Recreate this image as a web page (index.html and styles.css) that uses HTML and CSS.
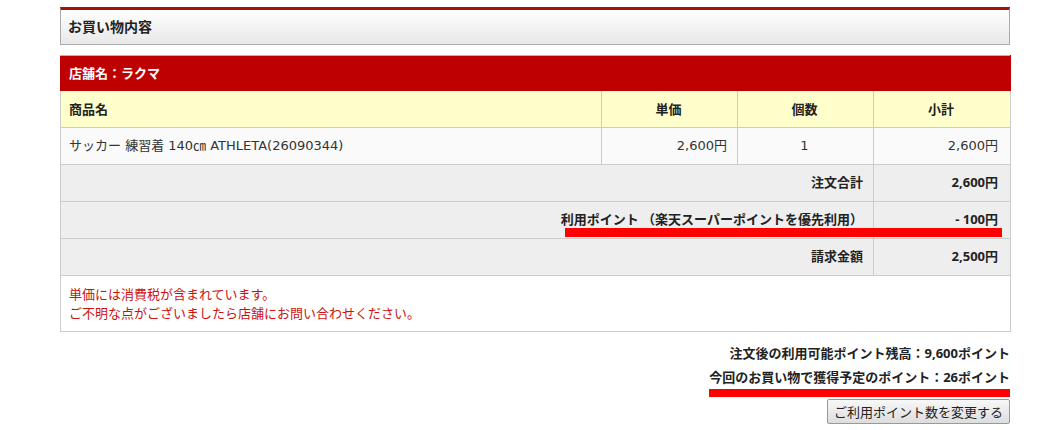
FILE: index.html
```html
<!DOCTYPE html>
<html lang="ja">
<head>
<meta charset="utf-8">
<link rel="stylesheet" href="styles.css">
</head>
<body>
<div class="page">
  <div class="section-title">お買い物内容</div>

  <div class="order">
    <table class="order-table">
      <colgroup>
        <col class="c-name">
        <col class="c-price">
        <col class="c-qty">
        <col class="c-sub">
      </colgroup>
      <tr class="shop-row"><th colspan="4">店舗名：ラクマ</th></tr>
      <tr class="head-row">
        <th class="left">商品名</th>
        <th>単価</th>
        <th>個数</th>
        <th>小計</th>
      </tr>
      <tr class="item-row">
        <td class="left">サッカー 練習着 140㎝ ATHLETA(26090344)</td>
        <td class="right">2,600円</td>
        <td class="center">1</td>
        <td class="right last">2,600円</td>
      </tr>
      <tr class="sum-row">
        <td colspan="3" class="right label">注文合計</td>
        <td class="right last val">2,600円</td>
      </tr>
      <tr class="sum-row">
        <td colspan="3" class="right label">利用ポイント （楽天スーパーポイントを優先利用）</td>
        <td class="right last val">- 100円</td>
      </tr>
      <tr class="sum-row">
        <td colspan="3" class="right label">請求金額</td>
        <td class="right last val">2,500円</td>
      </tr>
      <tr class="note-row">
        <td colspan="4">単価には消費税が含まれています。<br>ご不明な点がございましたら店舗にお問い合わせください。</td>
      </tr>
    </table>
    <div class="underline-1"></div>
  </div>

  <div class="points">
    <p class="pt-line">注文後の利用可能ポイント残高：9,600ポイント</p>
    <p class="pt-line earn">今回のお買い物で獲得予定のポイント：26ポイント</p>
    <button class="change-btn" type="button">ご利用ポイント数を変更する</button>
  </div>
</div>
</body>
</html>
```

FILE: styles.css
```css
html, body {
  margin: 0;
  padding: 0;
  background: #ffffff;
}
body {
  font-family: "DejaVu Sans", "Noto Sans CJK JP", sans-serif;
  font-size: 13px;
  color: #333;
}
.page {
  width: 950px;
  padding: 7px 0 0 60px;
}
.section-title {
  height: 38px;
  box-sizing: border-box;
  border: 1px solid #aaa;
  border-top: 3px solid #a50f0f;
  background: linear-gradient(#ffffff, #e8e8e8);
  padding: 0 7px;
  line-height: 33px;
  font-family: "Noto Sans", "Noto Sans CJK JP", sans-serif;
  font-size: 14px;
  font-weight: bold;
  color: #222;
}
.order {
  position: relative;
  margin-top: 10px;
}
.order-table {
  width: 950px;
  border-collapse: collapse;
  table-layout: fixed;
  border: 1px solid #ccc;
}
.c-name { width: 541px; }
.c-price { width: 136px; }
.c-qty { width: 136px; }
.c-sub { width: 137px; }
.order-table th, .order-table td {
  border: 1px solid #ccc;
  height: 37px;
  box-sizing: border-box;
  padding: 0 10px 0 8px;
  vertical-align: middle;
  line-height: 18px;
}
.order-table th {
  font-family: "Noto Sans", "Noto Sans CJK JP", sans-serif;
}
.shop-row th {
  background: #be0000;
  color: #fff;
  text-align: left;
  height: 35px;
  font-weight: bold;
  border-color: #be0000;
  border-top: 1px solid #e8a0a0;
}
.head-row th {
  background: #ffffcc;
  color: #222;
  font-weight: bold;
  text-align: center;
}
.head-row th.left { text-align: left; }
.item-row td {
  background: #fafafa;
  color: #333;
}
.left { text-align: left; }
.right { text-align: right; }
.center { text-align: center; }
.order-table td.last { padding-right: 12px; }
.sum-row td {
  background: #eeeeee;
  font-family: "Noto Sans", "Noto Sans CJK JP", sans-serif;
  font-weight: bold;
  color: #222;
  padding-bottom: 3px;
}
.note-row td {
  background: #fff;
  color: #cc1111;
  height: 56px;
  padding-top: 1px;
  line-height: 19px;
}
.underline-1 {
  position: absolute;
  left: 505px;
  top: 173px;
  width: 437px;
  height: 9px;
  background: #ff0000;
}
.points {
  display: flex;
  flex-direction: column;
  align-items: flex-end;
  margin-top: 9px;
}
.pt-line {
  margin: 0;
  font-family: "Noto Sans", "Noto Sans CJK JP", sans-serif;
  font-weight: bold;
  color: #222;
  line-height: 24px;
  height: 24px;
}
.earn {
  border-bottom: 8px solid #ff0000;
}
.change-btn {
  margin-top: 2px;
  height: 25px;
  padding: 0 6px;
  font-family: "Noto Sans CJK JP", sans-serif;
  font-size: 13px;
  color: #222;
  border: 1px solid #999;
  border-radius: 2px;
  background: linear-gradient(#f8f8f8, #dddddd);
}
```
